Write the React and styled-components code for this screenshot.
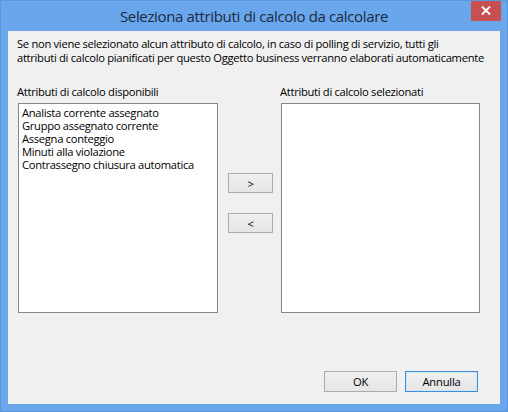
import React from 'react';
import styled, { createGlobalStyle } from 'styled-components';

const GlobalStyle = createGlobalStyle`
    html, body {
        margin: 0;
        padding: 0;
        background: #6aa6ec;
    }
`;

const uiFont = `"Open Sans", "Noto Sans", "DejaVu Sans", sans-serif`;

const Window = styled.div`
    box-sizing: border-box;
    width: 508px;
    height: 412px;
    display: flex;
    flex-direction: column;
    background: #6aa6ec;
    border: 1px solid #5c97de;
    padding: 0 7px 7px 7px;
    font-family: ${uiFont};
    overflow: hidden;
`;

const TitleBar = styled.div`
    position: relative;
    height: 30px;
    display: flex;
    align-items: center;
    justify-content: center;
    color: #1b2a40;
    font-size: 15px;
    letter-spacing: -0.35px;
`;

const CloseButton = styled.div`
    position: absolute;
    top: -1px;
    right: -1px;
    width: 30px;
    height: 21px;
    background: #c75050;
    display: flex;
    align-items: center;
    justify-content: center;
`;

const Client = styled.div`
    flex: 1;
    display: flex;
    flex-direction: column;
    background: #f0f0f0;
    padding: 6px 22px 12px 10px;
    color: #000;
    font-size: 11.2px;
    letter-spacing: -0.3px;
`;

const Description = styled.p`
    margin: 0 0 0 -1px;
    line-height: 14px;
    white-space: nowrap;
`;

const Columns = styled.div`
    display: grid;
    grid-template-columns: 200px 10px 45px 8px 199px;
    grid-template-areas:
        "leftLabel . . . rightLabel"
        "leftList . arrows . rightList";
    margin-top: 20px;
`;

const Label = styled.div`
    grid-area: ${p => p.$area};
    line-height: 14px;
    margin-left: -1px;
    margin-bottom: 4px;
    white-space: nowrap;
`;

const ListBox = styled.div`
    grid-area: ${p => p.$area};
    box-sizing: border-box;
    height: 210px;
    background: #fff;
    border: 1px solid #828790;
    padding: 2px 3px;
`;

const ListItem = styled.div`
    line-height: 13px;
    white-space: nowrap;
`;

const Arrows = styled.div`
    grid-area: arrows;
    display: flex;
    flex-direction: column;
    gap: 20px;
    margin-top: 70px;
`;

const Button = styled.button`
    box-sizing: border-box;
    width: ${p => p.$w}px;
    height: ${p => p.$h}px;
    padding: 0;
    font-family: ${uiFont};
    font-size: 11.2px;
    letter-spacing: -0.2px;
    color: #000;
    border: 1px solid ${p => (p.$default ? '#3c8fd8' : '#acacac')};
    background: linear-gradient(#f0f0f0, #e5e5e5);
    box-shadow: ${p => (p.$default ? 'inset 0 0 0 1px #cfe6f9' : 'none')};
`;

const Footer = styled.div`
    margin-top: auto;
    display: flex;
    justify-content: flex-end;
    gap: 8px;
`;

const available = [
    'Analista corrente assegnato',
    'Gruppo assegnato corrente',
    'Assegna conteggio',
    'Minuti alla violazione',
    'Contrassegno chiusura automatica',
];

export default function App() {
    return (
        <>
            <GlobalStyle />
            <Window>
                <TitleBar>
                    Seleziona attributi di calcolo da calcolare
                    <CloseButton>
                        <svg width="10" height="9" viewBox="0 0 10 9">
                            <path d="M1 0.5 L9 8.5 M9 0.5 L1 8.5" stroke="#fff" strokeWidth="1.8" />
                        </svg>
                    </CloseButton>
                </TitleBar>
                <Client>
                    <Description>
                        Se non viene selezionato alcun attributo di calcolo, in caso di polling di servizio, tutti gli
                        <br />
                        attributi di calcolo pianificati per questo Oggetto business verranno elaborati automaticamente
                    </Description>
                    <Columns>
                        <Label $area="leftLabel">Attributi di calcolo disponibili</Label>
                        <ListBox $area="leftList">
                            {available.map(item => (
                                <ListItem key={item}>{item}</ListItem>
                            ))}
                        </ListBox>
                        <Arrows>
                            <Button $w={45} $h={20}>&gt;</Button>
                            <Button $w={45} $h={20}>&lt;</Button>
                        </Arrows>
                        <Label $area="rightLabel">Attributi di calcolo selezionati</Label>
                        <ListBox $area="rightList" />
                    </Columns>
                    <Footer>
                        <Button $w={73} $h={21}>OK</Button>
                        <Button $w={73} $h={21} $default>Annulla</Button>
                    </Footer>
                </Client>
            </Window>
        </>
    );
}
